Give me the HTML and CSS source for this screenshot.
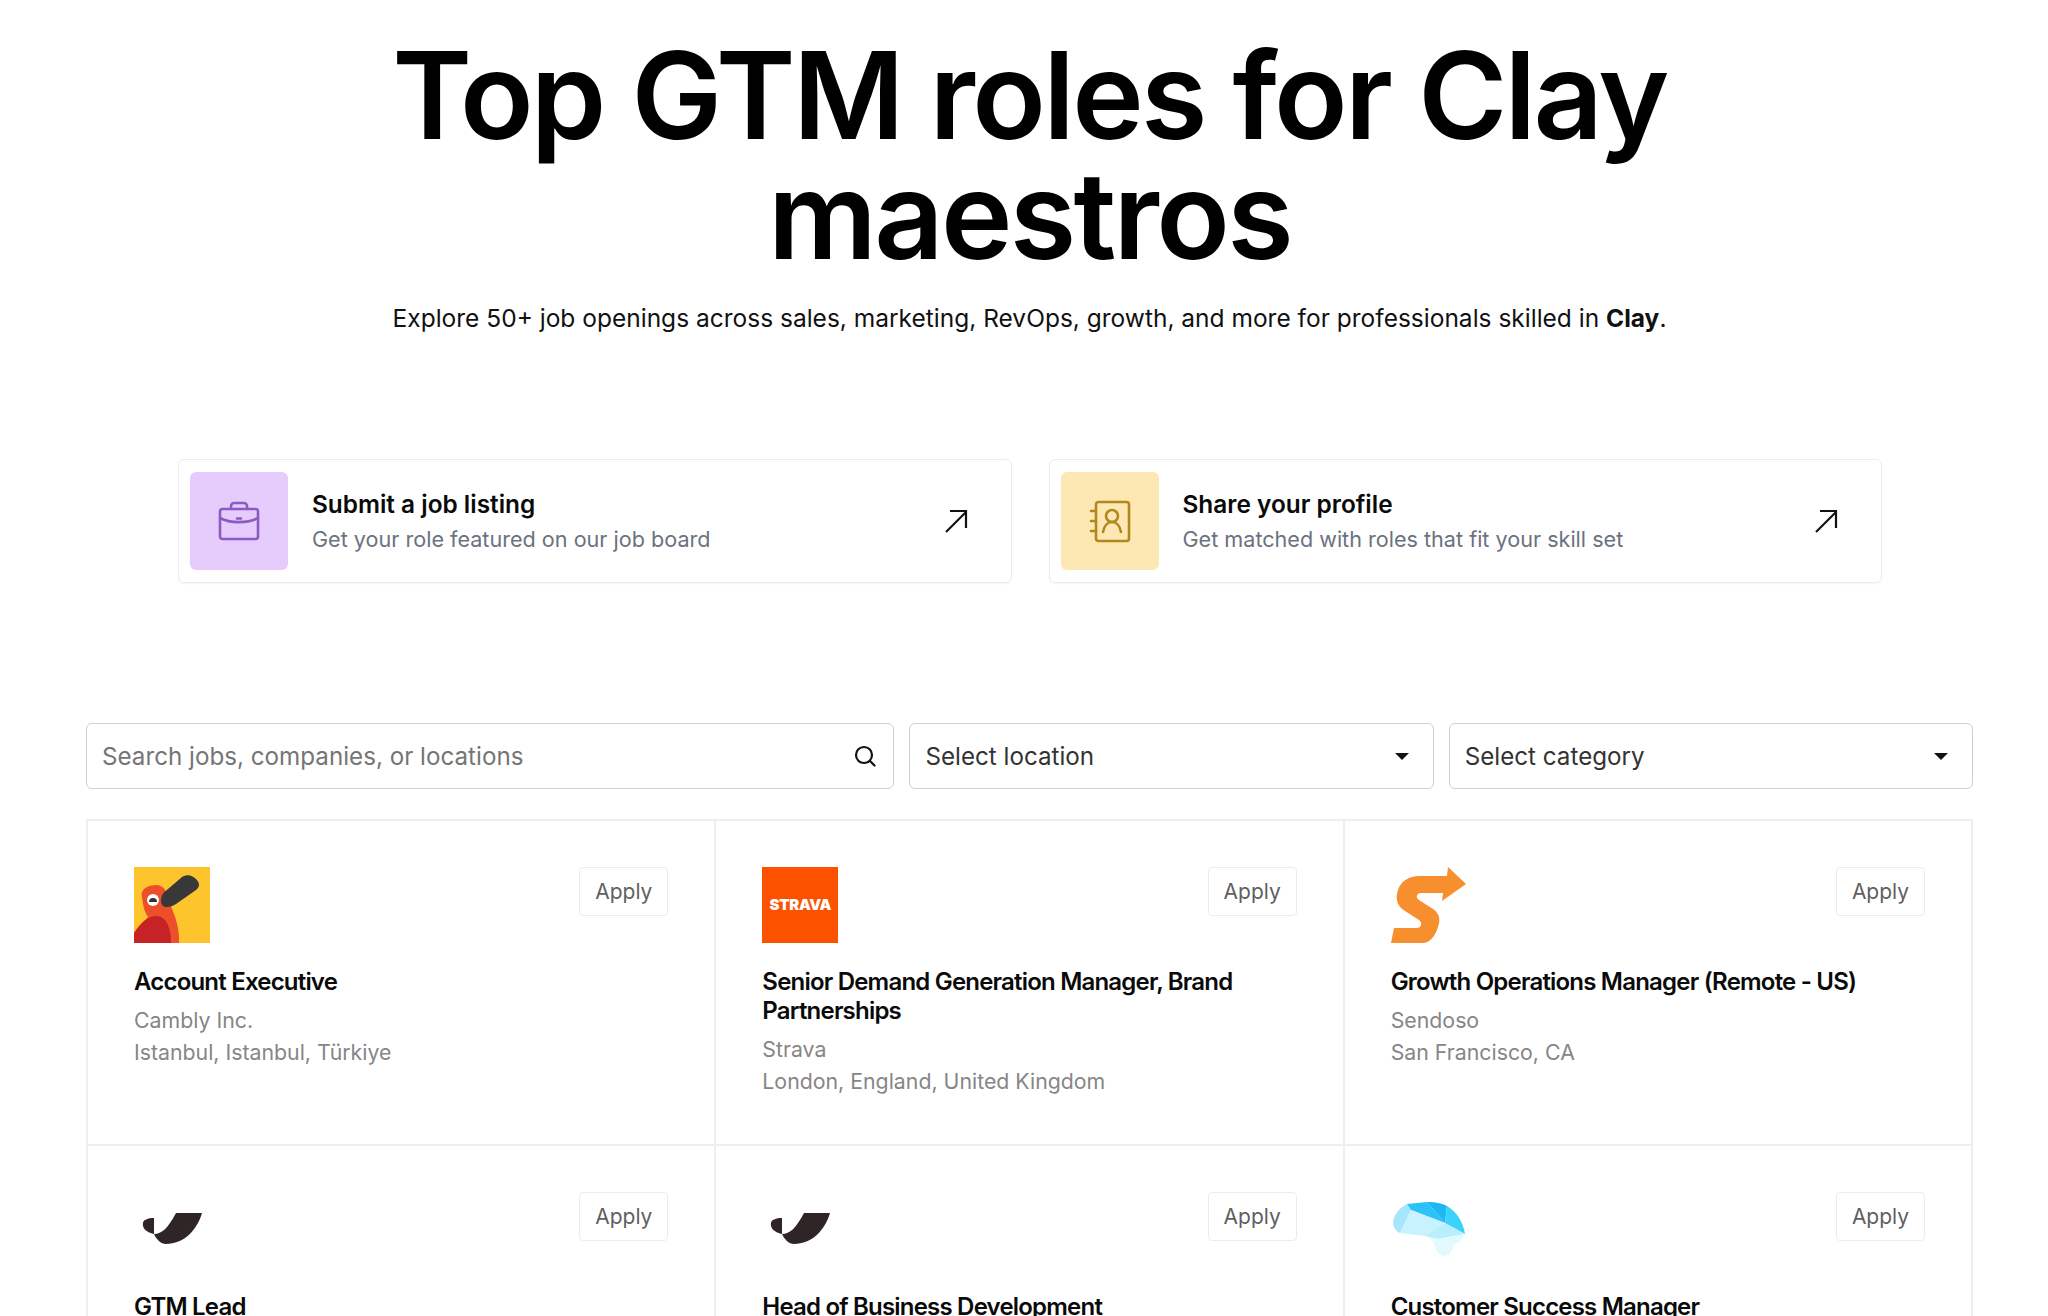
FILE: index.html
```html
<!DOCTYPE html>
<html lang="en">
<head>
    <meta charset="UTF-8">
    <meta name="viewport" content="width=device-width, initial-scale=1.0">
    <title>Top GTM roles for Clay maestros</title>
    <link rel="stylesheet" href="styles.css">
</head>
<body>
    <header class="hero">
        <h1>Top GTM roles for Clay maestros</h1>
        <p>Explore 50+ job openings across sales, marketing, RevOps, growth, and more for professionals skilled in <strong>Clay</strong>.</p>
    </header>

    <section class="cta-row">
        <a class="cta-card" href="#">
            <span class="cta-icon cta-purple">
                <svg width="44" height="44" viewBox="0 0 44 44" fill="none" stroke="#8a5cc2" stroke-width="2.6" stroke-linecap="round" stroke-linejoin="round">
                    <rect x="3" y="10" width="38" height="30" rx="2.5"/>
                    <path d="M14 10V7a3 3 0 0 1 3-3h10a3 3 0 0 1 3 3v3"/>
                    <path d="M3 19c10 5.500 28 5.500 38 0"/>
                    <path d="M20 19.500h4"/>
                </svg>
            </span>
            <span class="cta-text">
                <span class="cta-title">Submit a job listing</span>
                <span class="cta-sub">Get your role featured on our job board</span>
            </span>
            <svg class="cta-arrow" width="26" height="26" viewBox="0 0 26 26" fill="none" stroke="#111" stroke-width="2.2">
                <path d="M3 24L23 4"/>
                <path d="M7 3h16v17"/>
            </svg>
        </a>
        <a class="cta-card" href="#">
            <span class="cta-icon cta-yellow">
                <svg width="44" height="44" viewBox="0 0 44 44" fill="none" stroke="#b0881c" stroke-width="2.6" stroke-linecap="round" stroke-linejoin="round">
                    <rect x="8" y="3" width="33" height="39" rx="2.5"/>
                    <path d="M3 12h5M3 22h5M3 32h5"/>
                    <circle cx="24" cy="17" r="6"/>
                    <path d="M15 33c1-6 4.500-10 9-10s8 4 9 10"/>
                </svg>
            </span>
            <span class="cta-text">
                <span class="cta-title">Share your profile</span>
                <span class="cta-sub">Get matched with roles that fit your skill set</span>
            </span>
            <svg class="cta-arrow" width="26" height="26" viewBox="0 0 26 26" fill="none" stroke="#111" stroke-width="2.2">
                <path d="M3 24L23 4"/>
                <path d="M7 3h16v17"/>
            </svg>
        </a>
    </section>

    <section class="filters">
        <div class="filter filter-search">
            <input type="text" placeholder="Search jobs, companies, or locations">
            <svg width="24" height="24" viewBox="0 0 24 24" fill="none" stroke="#111" stroke-width="2.200" stroke-linecap="round">
                <circle cx="11" cy="11" r="8"/>
                <path d="M17 17l4.500 4.500"/>
            </svg>
        </div>
        <div class="filter"><span>Select location</span><i class="caret"></i></div>
        <div class="filter"><span>Select category</span><i class="caret"></i></div>
    </section>

    <section class="jobs">
        <article class="job">
            <div class="job-top">
                <svg class="logo" viewBox="0 0 76 76">
                    <rect width="76" height="76" fill="#fec42d"/>
                    <path d="M8 30C6 22 14 18 22 18C30 18 33 24 36 36C38 44 46 56 45 76L0 76L0 66L14 50C10 44 9 38 8 30Z" fill="#ee4f2b"/>
                    <path d="M0 66C6 56 14 49 22 49C32 49 37 60 37 76L0 76Z" fill="#c72327"/>
                    <path d="M27 34C27 28 30 25 34 22L48 10C53 7 58 8 62 12C66 16 66 20 62 23L42 37C36 41 27 42 27 34Z" fill="#383838"/>
                    <circle cx="19" cy="33" r="6" fill="#fff"/>
                    <path d="M15 35a4 4 0 0 1 8 0Z" fill="#333"/>
                </svg>
                <a class="apply" href="#">Apply</a>
            </div>
            <h3>Account Executive</h3>
            <p>Cambly Inc.</p>
            <p>Istanbul, Istanbul, Türkiye</p>
        </article>
        <article class="job">
            <div class="job-top">
                <div class="logo logo-strava">STRAVA</div>
                <a class="apply" href="#">Apply</a>
            </div>
            <h3>Senior Demand Generation Manager, Brand Partnerships</h3>
            <p>Strava</p>
            <p>London, England, United Kingdom</p>
        </article>
        <article class="job">
            <div class="job-top">
                <svg class="logo" viewBox="0 0 76 76">
                    <path d="M57 0L75 17L51 34L52 26L30 26C26 26 24 30 28 33L42 42C48 46 50 52 47 60C44 70 38 76 32 76L0 76L3 61L26 61C30 61 32 56 28 53L14 44C6 39 4 32 7 23C10 14 18 9 28 9L56 9Z" fill="#f78f2e"/>
                </svg>
                <a class="apply" href="#">Apply</a>
            </div>
            <h3>Growth Operations Manager (Remote - US)</h3>
            <p>Sendoso</p>
            <p>San Francisco, CA</p>
        </article>
        <article class="job">
            <div class="job-top">
                <svg class="logo" viewBox="0 0 76 76">
                    <path d="M42 21L68 21C63 38 50 52 32 52C27 52 22 47 20 42C28 42 34 36 42 21Z" fill="#2f2527"/>
                    <path d="M20 26L20 42C12 40 8 36 9 31C9 28 14 26 20 26Z" fill="#2f2527"/>
                </svg>
                <a class="apply" href="#">Apply</a>
            </div>
            <h3>GTM Lead</h3>
        </article>
        <article class="job">
            <div class="job-top">
                <svg class="logo" viewBox="0 0 76 76">
                    <path d="M42 21L68 21C63 38 50 52 32 52C27 52 22 47 20 42C28 42 34 36 42 21Z" fill="#2f2527"/>
                    <path d="M20 26L20 42C12 40 8 36 9 31C9 28 14 26 20 26Z" fill="#2f2527"/>
                </svg>
                <a class="apply" href="#">Apply</a>
            </div>
            <h3>Head of Business Development</h3>
        </article>
        <article class="job">
            <div class="job-top">
                <svg class="logo" viewBox="0 0 76 76">
                    <path d="M16 12L20 18L9 41C2 38 1 30 3 26C6 19 10 15 16 12Z" fill="#a5e6fc"/>
                    <path d="M16 12L36 10L54 31L20 18Z" fill="#2cc2f7"/>
                    <path d="M36 10C46 10 52 12 56 14L54 31Z" fill="#1db8f4"/>
                    <path d="M56 14C66 20 72 30 74 42L54 31Z" fill="#3dd2fb"/>
                    <path d="M20 18L54 31L34 44L9 41Z" fill="#c8f2fd"/>
                    <path d="M54 31L74 42L47 47L34 44Z" fill="#b8effc"/>
                    <path d="M34 44L47 47L74 42L69 50L62 53C62 60 58 64 53 64C47 64 46 58 43 52C41 47 38 45 34 44Z" fill="#e2f9fe"/>
                </svg>
                <a class="apply" href="#">Apply</a>
            </div>
            <h3>Customer Success Manager</h3>
        </article>
    </section>
</body>
</html>
```

FILE: styles.css
```css
html, body {
    height: 100%;
    overflow: hidden;
}

body {
    margin: 0;
    padding: 0 75px 0 86px;
    font-family: "Inter", "Liberation Sans", sans-serif;
    background-color: #fff;
    color: #000;
}

.hero {
    text-align: center;
    padding-top: 35px;
}

.hero h1 {
    margin: 0 auto;
    max-width: 1400px;
    font-size: 121px;
    line-height: 120px;
    font-weight: 600;
    letter-spacing: -2.7px;
}

.hero p {
    margin: 25px 0 0;
    font-size: 24.5px;
    line-height: 36px;
    color: #111;
}

.hero strong {
    font-weight: 700;
}

.cta-row {
    display: flex;
    gap: 37px;
    margin: 123px 91px 0 92px;
}

.cta-card {
    flex: 1;
    display: flex;
    align-items: center;
    gap: 24px;
    height: 124px;
    padding: 0 42px 0 11px;
    box-sizing: border-box;
    border: 1px solid #ececec;
    border-radius: 6px;
    color: inherit;
    text-decoration: none;
    box-shadow: 0 1px 2px rgba(0, 0, 0, 0.04);
}

.cta-icon {
    flex: none;
    width: 98px;
    height: 98px;
    border-radius: 6px;
    display: flex;
    align-items: center;
    justify-content: center;
}

.cta-purple {
    background-color: #e6ccfd;
}

.cta-yellow {
    background-color: #fde8b4;
}

.cta-text {
    flex: 1;
    display: flex;
    flex-direction: column;
    gap: 4px;
}

.cta-title {
    font-size: 24.4px;
    line-height: 32px;
    font-weight: 600;
    color: #0a0a0a;
}

.cta-sub {
    font-size: 21.6px;
    line-height: 30px;
    color: #6b7280;
}

.filters {
    display: grid;
    grid-template-columns: 808fr 524fr 524fr;
    gap: 15px;
    margin-top: 140px;
}

.filter {
    height: 66px;
    box-sizing: border-box;
    padding: 0 15px;
    display: flex;
    align-items: center;
    justify-content: space-between;
    border: 1px solid #cfcfcf;
    border-radius: 6px;
    font-size: 24.2px;
    color: #333;
}

.filter-search svg {
    margin-right: 1px;
}

.filter-search input {
    flex: 1;
    min-width: 0;
    border: none;
    outline: none;
    padding: 0;
    font: inherit;
    color: inherit;
}

.filter-search input::placeholder {
    color: #757575;
    opacity: 1;
}

.caret {
    margin-right: 9px;
    border-left: 7px solid transparent;
    border-right: 7px solid transparent;
    border-top: 7px solid #111;
}

.jobs {
    display: grid;
    grid-template-columns: repeat(3, 1fr);
    margin-top: 30px;
    border-top: 2px solid #eee;
    border-left: 2px solid #eee;
}

.job {
    padding: 46px 46px 47px;
    border-right: 2px solid #eee;
    border-bottom: 2px solid #eee;
}

.job-top {
    display: flex;
    justify-content: space-between;
    align-items: flex-start;
    margin-bottom: 24px;
}

.logo {
    display: block;
    width: 76px;
    height: 76px;
}

.logo-strava {
    background-color: #fc5200;
    color: #fff;
    font-size: 15px;
    font-weight: 900;
    line-height: 76px;
    text-align: center;
    letter-spacing: -0.3px;
}

.apply {
    width: 89px;
    height: 49px;
    box-sizing: border-box;
    border: 1px solid #ececec;
    border-radius: 4px;
    font-size: 21px;
    line-height: 47px;
    text-align: center;
    color: #5f5f5f;
    text-decoration: none;
}

.job h3 {
    margin: 0 0 8px;
    font-size: 24px;
    line-height: 29px;
    font-weight: 600;
    letter-spacing: -0.8px;
    color: #0a0a0a;
}

.job p {
    margin: 0;
    font-size: 21.3px;
    line-height: 32px;
    color: #868686;
}
```
